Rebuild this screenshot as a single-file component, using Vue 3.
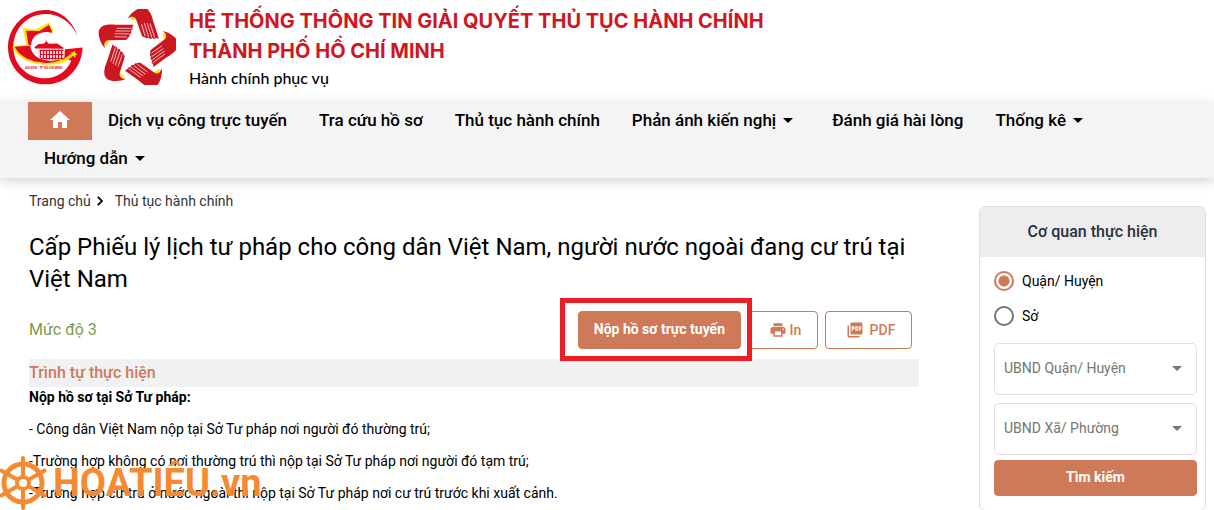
<template>
    <div class="page">
        <header class="header">
            <svg class="header__emblem" viewBox="24 30 224 224" aria-hidden="true">
                <path fill="#e30a20" d="M232 107 C214 58 178 30 136 30 C75 30 24 80 24 141 C24 203 75 252 136 252 C197 252 243 207 247 142 L194 147 L192 177 L213 181 C200 214 170 234 135 234 C82 234 40 193 40 141 C40 86 82 42 136 42 C178 42 212 66 232 107 Z" />
                <path fill="#ffe600" d="M37 138 L78 134 L68 84 L106 88 L146 67 L160 91 L150 101 L138 84 L112 104 L82 99 L92 138 L60 146 C75 175 110 190 148 186 C175 186 198 174 213 160 L216 168 C200 186 172 195 140 193 C91 194 49 171 37 138 Z" />
                <path fill="#e30a20" d="M78 92 L118 93 L146 74 L157 98 C122 90 94 106 93 136 L85 134 Z" />
                <path fill="#e30a20" d="M44 140 L90 137 C94 164 114 180 151 182 L190 177 L210 158 C190 181 165 188 137 188 C91 186 59 170 44 140 Z" />
                <path fill="#e30a20" d="M103 141 L114 132 L132 130 L137 124 L137 116 L139 124 L146 131 L171 130 L190 143 L190 146 L105 145 Z" />
                <path fill="none" stroke="#e30a20" stroke-width="3" d="M118 151 H190 M120 163 H190 M122 175 H190" />
                <path fill="none" stroke="#e30a20" stroke-width="4" d="M121 148 V174 M130 148 V176 M139 148 V178 M148 148 V178 M157 148 V178 M166 148 V178 M175 148 V178 M184 148 V178" />
                <path fill="#ffe600" d="M224 151 L225 159 L233 162 L225 165 L225 173 L219 167 L211 169 L216 162 L211 155 L219 157 Z" />
                <text class="header__emblem-text" x="75" y="207" font-size="9">SÀI GÒN - TP HỒ CHÍ MINH</text>
            </svg>
            <svg class="header__hands" viewBox="294 28 234 228" aria-hidden="true">
                <g v-for="angle in handAngles" :key="angle" :transform="`rotate(${angle} 410 148)`">
                    <path fill="#ffe100" d="M309 122 L328 119 L319 141 Z" />
                    <path fill="#cb1720" d="M401 75 L352 75 C338 75 330 73 318 76 C303 79 295 88 296 102 C297 117 305 136 315 145 C311 132 314 123 325 122 L374 121 C380 121 383 118 383 115 L388 111 L389 104 L394 100 L393 93 L398 88 L397 82 Z" />
                    <path fill="none" stroke="#fff" stroke-width="2" d="M350 86 L395 86 M346 94 L391 94 M344 102 L387 103 M343 111 L381 112" />
                </g>
            </svg>
            <div class="header__titles">
                <h1 class="header__name">
                    Hệ thống thông tin giải quyết thủ tục hành chính<br />Thành phố Hồ Chí Minh
                </h1>
                <p class="header__slogan">Hành chính phục vụ</p>
            </div>
        </header>

        <nav class="nav">
            <a class="nav__home" href="#" aria-label="Trang chủ">
                <svg viewBox="0 0 24 24" width="24" height="24"><path fill="#fff" d="M10 20v-6h4v6h5v-8h3L12 3 2 12h3v8z" /></svg>
            </a>
            <a v-for="item in menu" :key="item.label" class="nav__item" href="#">
                {{ item.label }}
                <svg v-if="item.children" viewBox="0 0 24 24" width="24" height="24"><path d="M7 10l5 5 5-5z" /></svg>
            </a>
        </nav>

        <div class="content">
            <main class="main">
                <div class="breadcrumb">
                    <a href="#">Trang chủ</a>
                    <svg viewBox="0 0 24 24" width="18" height="18"><path d="M10 6L8.600 7.400 13.200 12l-4.600 4.600L10 18l6-6z" stroke="#333" /></svg>
                    <a href="#">Thủ tục hành chính</a>
                </div>
                <h2 class="title">Cấp Phiếu lý lịch tư pháp cho công dân Việt Nam, người nước ngoài đang cư trú tại Việt Nam</h2>
                <div class="toolbar">
                    <span class="toolbar__level">Mức độ 3</span>
                    <div class="toolbar__submit">
                        <button class="btn btn--fill" type="button">Nộp hồ sơ trực tuyến</button>
                        <span class="toolbar__mark"></span>
                    </div>
                    <button class="btn btn--print" type="button">
                        <svg viewBox="0 0 24 24" width="18" height="18"><path d="M19 8H5c-1.660 0-3 1.340-3 3v6h4v4h12v-4h4v-6c0-1.660-1.340-3-3-3zm-3 11H8v-5h8v5zm3-7c-.550 0-1-.450-1-1s.450-1 1-1 1 .450 1 1-.450 1-1 1zm-1-9H6v4h12V3z" /></svg>
                        In
                    </button>
                    <button class="btn btn--pdf" type="button">
                        <svg viewBox="0 0 24 24" width="18" height="18"><path d="M20 2H8c-1.100 0-2 .900-2 2v12c0 1.100.900 2 2 2h12c1.100 0 2-.900 2-2V4c0-1.100-.900-2-2-2zm-8.500 7.500c0 .830-.670 1.500-1.500 1.500H9v2H7.500V7H10c.830 0 1.500.670 1.500 1.500v1zm5 2c0 .830-.670 1.500-1.500 1.500h-2.500V7H15c.830 0 1.500.670 1.500 1.500v3zm4-3H19v1h1.500V11H19v2h-1.500V7h3v1.500zM9 9.500h1v-1H9v1zM4 6H2v14c0 1.100.900 2 2 2h14v-2H4V6zm10 5.500h1v-3h-1v3z" /></svg>
                        PDF
                    </button>
                </div>
                <h3 class="section">Trình tự thực hiện</h3>
                <div class="steps">
                    <p><strong>Nộp hồ sơ tại Sở Tư pháp:</strong></p>
                    <p v-for="step in steps" :key="step">{{ step }}</p>
                    <div class="watermark">
                        <svg viewBox="0 0 53 56" width="53" height="56" aria-hidden="true">
                            <g fill="none" stroke="#f68a33" transform="translate(23 28)">
                                <circle r="19" stroke-width="5" />
                                <circle r="6" stroke-width="4" />
                                <path v-for="angle in spokes" :key="angle" d="M0 -7 V-25" stroke-width="4" stroke-linecap="round" :transform="`rotate(${angle})`" />
                            </g>
                        </svg>
                        <span class="watermark__name">HOATIÊU.vn</span>
                    </div>
                </div>
            </main>

            <aside class="agency">
                <h3 class="agency__title">Cơ quan thực hiện</h3>
                <form class="agency__body" @submit.prevent>
                    <div class="agency__levels">
                        <label v-for="level in levels" :key="level" class="radio">
                            <input v-model="selected" type="radio" name="level" :value="level" />
                            {{ level }}
                        </label>
                    </div>
                    <div class="agency__fields">
                        <div v-for="field in fields" :key="field" class="select">
                            <select :aria-label="field">
                                <option>{{ field }}</option>
                            </select>
                            <svg class="select__arrow" viewBox="0 0 10 5" width="10" height="5"><path fill="#757575" d="M0 0h10L5 5z" /></svg>
                        </div>
                    </div>
                    <button class="btn btn--fill btn--search" type="submit">Tìm kiếm</button>
                </form>
            </aside>
        </div>
    </div>
</template>

<script setup>
import { ref } from 'vue';

const menu = [
    { label: 'Dịch vụ công trực tuyến' },
    { label: 'Tra cứu hồ sơ' },
    { label: 'Thủ tục hành chính' },
    { label: 'Phản ánh kiến nghị', children: true },
    { label: 'Đánh giá hài lòng' },
    { label: 'Thống kê', children: true },
    { label: 'Hướng dẫn', children: true }
];

const steps = [
    '- Công dân Việt Nam nộp tại Sở Tư pháp nơi người đó thường trú;',
    '-Trường hợp không có nơi thường trú thì nộp tại Sở Tư pháp nơi người đó tạm trú;',
    '-Trường hợp cư trú ở nước ngoài thì nộp tại Sở Tư pháp nơi cư trú trước khi xuất cảnh.'
];

const levels = ['Quận/ Huyện', 'Sở'];
const selected = ref('Quận/ Huyện');
const fields = ['UBND Quận/ Huyện', 'UBND Xã/ Phường'];

// Rotation of each hand and each wheel spoke
const handAngles = [0, 72, 144, 216, 288];
const spokes = [0, 60, 120, 180, 240, 300];
</script>

<style>
body {
    background-color: #fff;
}
</style>

<style scoped>
.page {
    font-family: Roboto, "Noto Sans", sans-serif;
    font-size: 14px;
    line-height: 20px;
    color: #000;
}

h1, h2, h3, p {
    margin: 0;
}

a {
    color: inherit;
    text-decoration: none;
}

.header {
    display: flex;
    align-items: flex-start;
    padding: 0 8px 12px;
}

.header__emblem {
    width: 75px;
    height: 75px;
    margin-top: 10px;
}

.header__emblem-text {
    font-family: Roboto, sans-serif;
    font-weight: 700;
    fill: #e30a20;
}

.header__hands {
    width: 78px;
    height: 76px;
    margin: 9px 0 0 15px;
}

.header__titles {
    padding: 6px 0 0 13px;
}

.header__name {
    font-family: Inter, "Open Sans", sans-serif;
    font-size: 20px;
    line-height: 30px;
    font-weight: 700;
    text-transform: uppercase;
    color: #d0171f;
}

.header__slogan {
    font-family: Lato, "Open Sans", sans-serif;
    font-size: 16px;
    line-height: 24px;
    font-weight: 500;
}

.nav {
    display: flex;
    flex-wrap: wrap;
    padding: 0 28px;
    background-color: #f4f4f4;
    box-shadow: 0 3px 12px rgba(0, 0, 0, 0.18);
}

.nav__home,
.nav__item {
    display: flex;
    align-items: center;
    box-sizing: border-box;
    height: 38px;
    padding: 0 16px 2px;
    font-size: 17px;
    font-weight: 500;
}

.nav__home {
    justify-content: center;
    width: 64px;
    background-color: #ce7a58;
}

.content {
    display: grid;
    grid-template-columns: minmax(0, 1fr) 227px;
    gap: 60px;
    align-items: start;
    padding: 0 8px 0 29px;
}

.main {
    padding-top: 13px;
}

.breadcrumb {
    display: flex;
    align-items: center;
    color: #333;
}

.breadcrumb svg {
    margin-right: 6px;
}

.title {
    margin-top: 20px;
    font-size: 24px;
    line-height: 32px;
    font-weight: 400;
}

.toolbar {
    display: flex;
    align-items: center;
    gap: 7px;
    padding: 16px 7px 10px 0;
}

.toolbar__level {
    margin-right: auto;
    font-size: 16px;
    color: #7f9a4c;
}

.toolbar__submit {
    position: relative;
}

.toolbar__mark {
    position: absolute;
    inset: -13px -11px -12px -18px;
    border: 5px solid #ee1c25;
    pointer-events: none;
}

.btn {
    display: flex;
    align-items: center;
    justify-content: center;
    height: 38px;
    padding: 0 15px;
    border: 1px solid #ce7a58;
    border-radius: 4px;
    background-color: #fff;
    color: #ce7a58;
    font-family: inherit;
    font-size: 14px;
    font-weight: 500;
    cursor: pointer;
}

.btn svg {
    fill: currentColor;
}

.btn--fill {
    padding-bottom: 3px;
    background-color: #ce7a58;
    color: #fff;
    font-weight: 700;
}

.btn--print {
    width: 70px;
    gap: 3px;
    padding-left: 19px;
}

.btn--pdf {
    width: 87px;
    gap: 6px;
    padding-left: 19px;
}

.section {
    background-color: #f0f1f3;
    font-size: 16px;
    line-height: 28px;
    font-weight: 500;
    color: #ce7a58;
}

.steps {
    position: relative;
}

.steps p {
    margin-bottom: 12px;
}

.watermark {
    position: absolute;
    left: -29px;
    bottom: -8px;
    display: flex;
    align-items: center;
}

.watermark__name {
    font-family: Roboto, sans-serif;
    font-size: 38px;
    line-height: 48px;
    font-weight: 700;
    color: #f68a33;
}

.agency {
    margin-top: 28px;
    border: 1px solid #dfdfdf;
    border-radius: 6px;
    overflow: hidden;
}

.agency__title {
    background-color: #eeecec;
    font-size: 16px;
    line-height: 50px;
    font-weight: 500;
    text-align: center;
    color: #26323c;
}

.agency__body {
    padding: 14px 8px 14px 14px;
}

.agency__levels {
    display: grid;
    gap: 15px;
    margin-bottom: 17px;
}

.agency__fields {
    display: grid;
    gap: 8px;
    margin-bottom: 5px;
}

.radio {
    display: flex;
    align-items: center;
    gap: 8px;
}

.radio input {
    appearance: none;
    width: 20px;
    height: 20px;
    margin: 0;
    border: 2px solid #757575;
    border-radius: 50%;
}

.radio input:checked {
    border-color: #ce7a58;
    background: radial-gradient(circle, #ce7a58 5px, transparent 6px);
}

.select {
    position: relative;
}

.select select {
    appearance: none;
    display: block;
    width: 100%;
    height: 52px;
    padding: 0 9px 2px;
    border: 1px solid #dfdfdf;
    border-radius: 5px;
    background-color: #fff;
    color: #757575;
    font-family: inherit;
    font-size: 14px;
}

.select__arrow {
    position: absolute;
    right: 15px;
    top: 23px;
}

.btn--search {
    width: 100%;
    height: 36px;
}
</style>
